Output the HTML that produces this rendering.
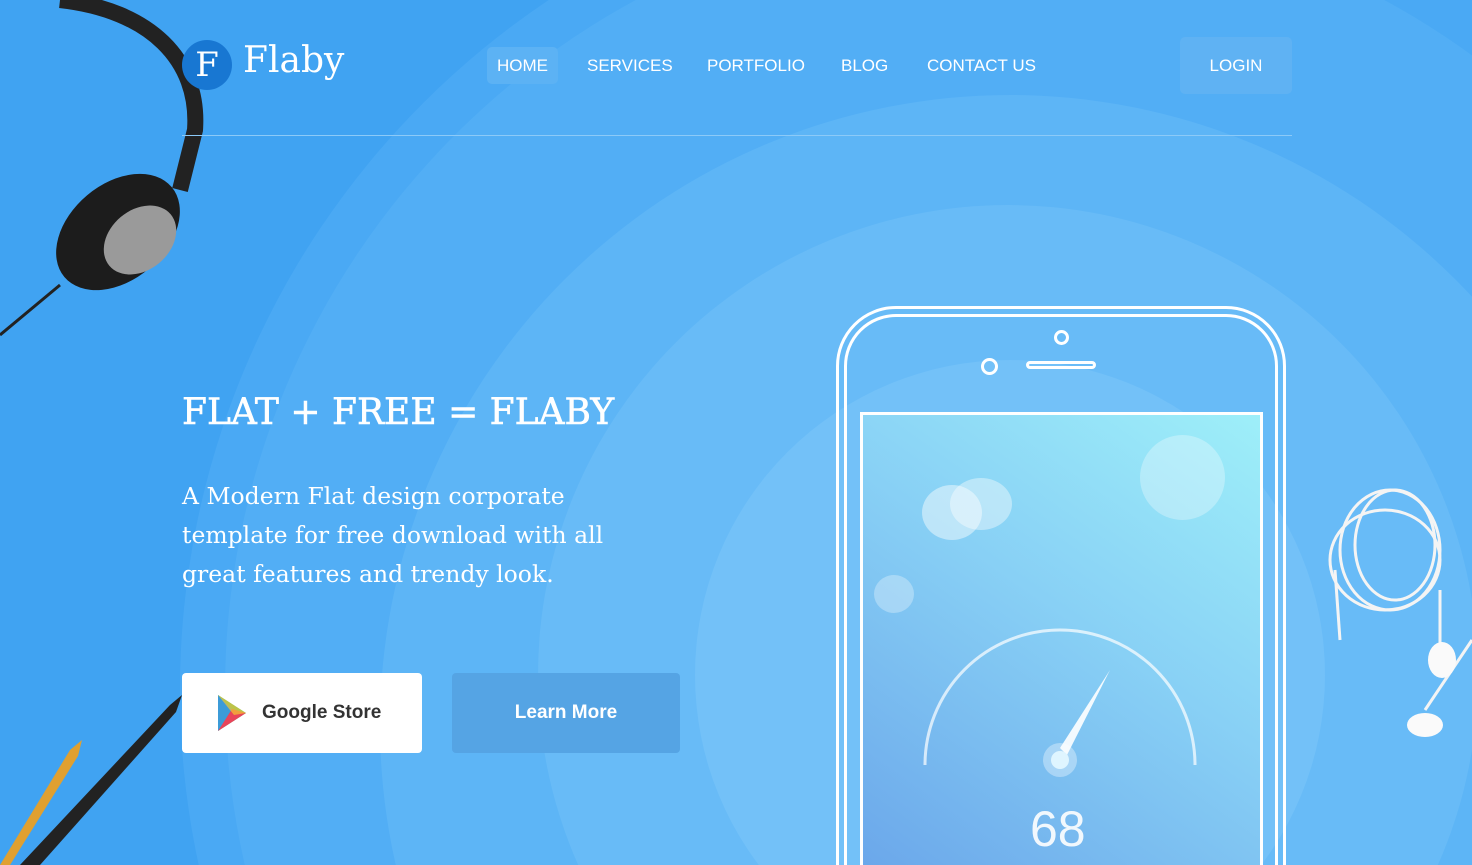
<!DOCTYPE html>
<html><head><meta charset="utf-8"><style>
*{margin:0;padding:0;box-sizing:border-box}
html,body{width:1472px;height:865px;overflow:hidden}
body{position:relative;background:#40a3f2;font-family:"Liberation Sans",sans-serif}
.c{position:absolute;border-radius:50%}
.nav a{position:absolute;top:47px;height:37px;line-height:37px;color:#fff;font-size:17px;text-decoration:none;padding:0 10px}
</style></head><body>
<div class="c" style="left:180px;top:-140px;width:1660px;height:1660px;background:#4aa9f4"></div>
<div class="c" style="left:225px;top:-95px;width:1570px;height:1570px;background:#52aef5"></div>
<div class="c" style="left:380px;top:95px;width:1260px;height:1260px;background:#5db5f6"></div>
<div class="c" style="left:538px;top:205px;width:940px;height:940px;background:#68bbf7"></div>
<div class="c" style="left:695px;top:360px;width:630px;height:630px;background:#73c1f8"></div>

<svg style="position:absolute;left:0;top:0" width="230" height="350">
<path d="M60 0 C150 10 200 60 195 130 L180 190" stroke="#222" stroke-width="16" fill="none"/>
<ellipse cx="118" cy="232" rx="70" ry="48" transform="rotate(-40 118 232)" fill="#1c1c1c"/>
<ellipse cx="140" cy="240" rx="40" ry="30" transform="rotate(-40 140 240)" fill="#9a9a9a"/>
<path d="M60 285 L0 335" stroke="#222" stroke-width="3"/>
</svg>

<div style="position:absolute;left:182px;top:40px;width:50px;height:50px;border-radius:50%;background:#1877d2;color:#fff;font:34px 'DejaVu Serif',serif;text-align:center;line-height:50px">F</div>
<div style="position:absolute;left:243px;top:40px;color:#fff;font:36px 'DejaVu Serif',serif">Flaby</div>

<div class="nav">
<a style="left:487px;background:#5cb2f4;border-radius:5px">HOME</a>
<a style="left:577px">SERVICES</a>
<a style="left:697px">PORTFOLIO</a>
<a style="left:831px">BLOG</a>
<a style="left:917px">CONTACT US</a>
</div>
<div style="position:absolute;left:1180px;top:37px;width:112px;height:57px;background:#5fb2f3;border-radius:5px;color:#fff;font-size:17px;text-align:center;line-height:57px">LOGIN</div>
<div style="position:absolute;left:182px;top:135px;width:1110px;height:1px;background:#8ccaf8"></div>

<div style="position:absolute;left:182px;top:392px;color:#fff;font:36px 'DejaVu Serif',serif;white-space:nowrap;-webkit-text-stroke:0.6px #fff">FLAT + FREE = FLABY</div>
<div style="position:absolute;left:182px;top:477px;width:470px;color:#fff;font:23.5px/39px 'DejaVu Serif',serif">A Modern Flat design corporate template for free download with all great features and trendy look.</div>

<div style="position:absolute;left:182px;top:673px;width:240px;height:80px;background:#fff;border-radius:4px"></div>
<svg style="position:absolute;left:216px;top:693px" width="32" height="40"><path d="M2 2 L30 20 L2 38Z" fill="#3fbf7f"/><path d="M2 2 L20 20 L2 38Z" fill="#3c9bd8"/><path d="M16 16 L30 20 L2 38Z" fill="#e9445a"/><path d="M2 2 L30 20 L18 22Z" fill="#f4c430" opacity=".7"/></svg>
<div style="position:absolute;left:262px;top:702px;color:#333;font-weight:bold;font-size:19px">Google Store</div>
<div style="position:absolute;left:452px;top:673px;width:228px;height:80px;background:#55a4e4;border-radius:4px;color:#fff;font-weight:bold;font-size:19px;text-align:center;line-height:80px">Learn More</div>

<svg style="position:absolute;left:0;top:690px" width="190" height="175">
<path d="M0 175 L70 60 L82 50 L78 66 L10 175Z" fill="#e0a030"/>
<path d="M20 175 L170 15 L182 5 L176 22 L40 175Z" fill="#222"/>
</svg>

<div style="position:absolute;left:836px;top:306px;width:450px;height:620px;border:3px solid #fff;border-radius:60px"></div>
<div style="position:absolute;left:844px;top:314px;width:434px;height:610px;border:3px solid #fff;border-radius:52px"></div>
<div style="position:absolute;left:860px;top:412px;width:403px;height:470px;border:3px solid #fff;background:linear-gradient(215deg,#9eeff9 0%,#88d0f5 45%,#6aa6ea 100%)"></div>
<div style="position:absolute;left:1054px;top:330px;width:15px;height:15px;border:3px solid #fff;border-radius:50%"></div>
<div style="position:absolute;left:981px;top:358px;width:17px;height:17px;border:3px solid #fff;border-radius:50%"></div>
<div style="position:absolute;left:1026px;top:361px;width:70px;height:8px;border:3px solid #fff;border-radius:4px"></div>
<div class="c" style="left:1140px;top:435px;width:85px;height:85px;background:rgba(255,255,255,.3)"></div>
<div class="c" style="left:922px;top:485px;width:60px;height:55px;background:rgba(255,255,255,.45)"></div>
<div class="c" style="left:950px;top:478px;width:62px;height:52px;background:rgba(255,255,255,.4)"></div>
<div class="c" style="left:874px;top:575px;width:40px;height:38px;background:rgba(255,255,255,.3)"></div>
<svg style="position:absolute;left:915px;top:615px" width="290" height="190">
<path d="M10 150 A135 135 0 0 1 280 150" stroke="#fff" stroke-opacity=".7" stroke-width="3" fill="none"/>
<path d="M145 133 L195 55 L152 140Z" fill="#fff" fill-opacity=".9"/>
<circle cx="145" cy="145" r="17" fill="#fff" fill-opacity=".35"/><circle cx="145" cy="145" r="9" fill="#dff5ff"/>
</svg>
<div style="position:absolute;left:1030px;top:800px;color:#fff;font-size:50px;opacity:.9">68</div>

<svg style="position:absolute;left:1320px;top:480px" width="152" height="270">
<g stroke="#f4f4f4" stroke-width="3" fill="none">
<ellipse cx="70" cy="70" rx="50" ry="60"/><ellipse cx="75" cy="65" rx="40" ry="55"/><ellipse cx="65" cy="80" rx="55" ry="50"/>
<path d="M15 90 L20 160"/><path d="M120 110 L120 170"/><path d="M152 160 L105 230"/>
</g>
<ellipse cx="122" cy="180" rx="14" ry="18" fill="#fafafa"/>
<ellipse cx="105" cy="245" rx="18" ry="12" fill="#fafafa"/>
</svg>
</body></html>
